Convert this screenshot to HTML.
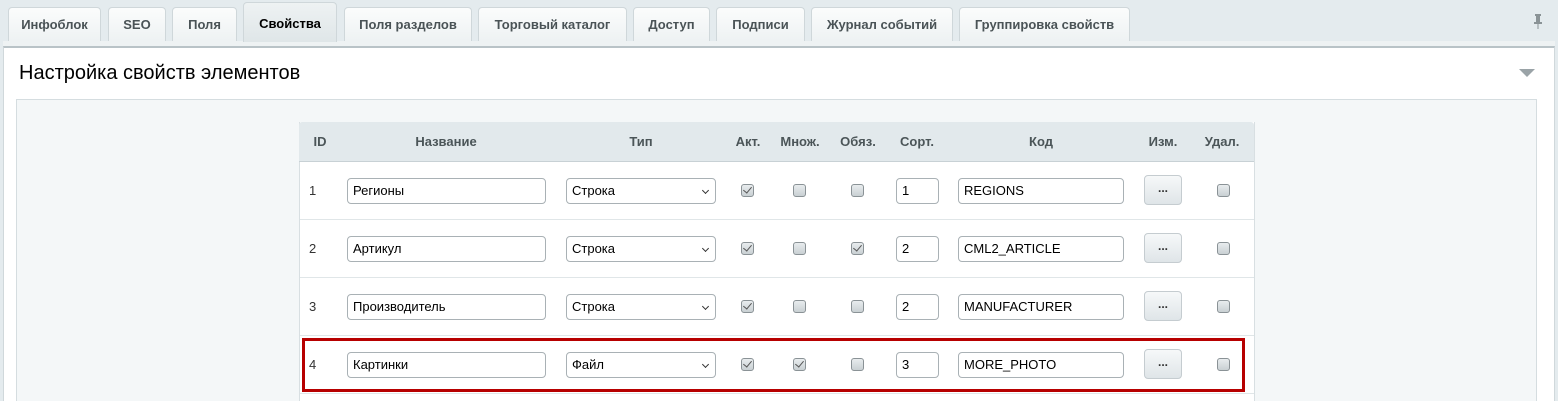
<!DOCTYPE html>
<html style="width:1558px;height:401px;overflow:hidden"><head><meta charset="utf-8"><style>
body{margin:0;width:1558px;height:401px;overflow:hidden;background:#e4ebee;font-family:"Liberation Sans",Arial,sans-serif;position:relative}
.tab{position:absolute;top:7px;height:34px;background:linear-gradient(#fbfcfc,#eef2f3);border:1px solid #cfd7da;border-bottom:none;border-radius:4px 4px 0 0;font-size:13px;font-weight:bold;color:#4a5356;text-align:center;line-height:34px;box-sizing:border-box}
.tab.act{top:2px;height:40px;background:linear-gradient(#eef2f3,#dfe6e8);color:#000;line-height:42px}
.panel{position:absolute;left:3px;top:46px;width:1552px;height:355px;background:#fff;border-top:2px solid #b9c3c7;border-left:1px solid #d0d8db;border-right:1px solid #d0d8db;box-sizing:border-box}
.strip{position:absolute;left:3px;top:41px;width:1552px;height:5px;background:#eef2f3}
h1{position:absolute;left:19px;top:62px;margin:0;font-weight:normal;font-size:20px;color:#000}
.inner{position:absolute;left:16px;top:99px;width:1519px;height:302px;background:#f4f7f8;border:1px solid #d5dde0;border-bottom:none}
.tbl{position:absolute;left:299px;top:122px;width:954px;height:279px;background:#fff;border:1px solid #d8dfe2;border-top:none;border-bottom:none}
.hdr{position:absolute;left:299px;top:122px;width:955px;height:39px;background:#e2e9ec;border-bottom:1px solid #c8d1d5;border-radius:3px 3px 0 0}
.h{position:absolute;top:134px;font-size:13px;font-weight:bold;color:#4b5558;transform:translateX(-50%)}
.line{position:absolute;left:300px;width:954px;height:1px;background:#e0e6e8}
.id{position:absolute;left:309px;font-size:13px;color:#333}
.in{position:absolute;height:26px;box-sizing:border-box;border:1px solid #a9b1b5;border-radius:4px;background:#fff;font-size:13px;color:#000;padding-left:5px;line-height:24px}
.sel:after{content:"";position:absolute;right:7px;top:9px;width:4px;height:4px;border-right:1.5px solid #333;border-bottom:1.5px solid #333;transform:rotate(45deg)}
.cb{position:absolute;width:13px;height:13px;box-sizing:border-box;border:1px solid #8a9296;border-radius:3px;background:linear-gradient(#e8ecee,#c9d0d3)}
.cb.c:after{content:"";position:absolute;left:3px;top:0px;width:4px;height:7px;border-right:1.5px solid #555;border-bottom:1.5px solid #555;transform:rotate(40deg)}
.btn{position:absolute;left:1144px;width:38px;height:30px;box-sizing:border-box;border:1px solid #c5ccd0;border-radius:4px;background:linear-gradient(#f6f8f9,#dfe5e8);font-size:12px;font-weight:bold;text-align:center;line-height:24px;color:#333}
.red{position:absolute;left:302px;top:338px;width:943px;height:54px;box-sizing:border-box;border:3px solid #b70000}
</style></head><body>
<div class="tab" style="left:8px;width:93px">Инфоблок</div>
<div class="tab" style="left:108px;width:58px">SEO</div>
<div class="tab" style="left:172px;width:65px">Поля</div>
<div class="tab" style="left:344px;width:128px">Поля разделов</div>
<div class="tab" style="left:478px;width:149px">Торговый каталог</div>
<div class="tab" style="left:633px;width:77px">Доступ</div>
<div class="tab" style="left:716px;width:89px">Подписи</div>
<div class="tab" style="left:811px;width:142px">Журнал событий</div>
<div class="tab" style="left:959px;width:171px">Группировка свойств</div>
<div class="strip"></div>
<div class="panel"></div>
<div class="tab act" style="left:243px;width:94px">Свойства</div>
<svg style="position:absolute;left:1532px;top:13px" width="14" height="18"><rect x="3" y="1" width="6" height="2" fill="#8a9396"/><rect x="4" y="3" width="4" height="6" fill="#8a9396"/><rect x="2" y="9" width="8" height="2" fill="#8a9396"/><rect x="5.5" y="11" width="1" height="5" fill="#8a9396"/></svg>
<svg style="position:absolute;left:1519px;top:69px" width="16" height="9"><polygon points="0,0 16,0 8,8" fill="#9aa3a7"/></svg>
<h1>Настройка свойств элементов</h1>
<div class="inner"></div>
<div class="tbl"></div>
<div class="hdr"></div>
<div class="h" style="left:320px">ID</div><div class="h" style="left:446px">Название</div><div class="h" style="left:641px">Тип</div><div class="h" style="left:748px">Акт.</div><div class="h" style="left:800px">Множ.</div><div class="h" style="left:858px">Обяз.</div><div class="h" style="left:917px">Сорт.</div><div class="h" style="left:1041px">Код</div><div class="h" style="left:1163px">Изм.</div><div class="h" style="left:1222px">Удал.</div>
<div class="line" style="top:219px"></div><div class="line" style="top:277px"></div><div class="line" style="top:335px"></div><div class="line" style="top:393px"></div>

<div class="id" style="top:183px">1</div>
<div class="in" style="left:347px;top:178px;width:199px">Регионы</div>
<div class="in sel" style="left:566px;top:178px;width:150px">Строка</div>
<div class="cb c" style="left:741px;top:184px"></div><div class="cb" style="left:793px;top:184px"></div><div class="cb" style="left:851px;top:184px"></div>
<div class="in" style="left:896px;top:178px;width:43px">1</div>
<div class="in" style="left:958px;top:178px;width:166px">REGIONS</div>
<div class="btn" style="top:175px">...</div><div class="cb" style="left:1217px;top:184px"></div>

<div class="id" style="top:241px">2</div>
<div class="in" style="left:347px;top:236px;width:199px">Артикул</div>
<div class="in sel" style="left:566px;top:236px;width:150px">Строка</div>
<div class="cb c" style="left:741px;top:242px"></div><div class="cb" style="left:793px;top:242px"></div><div class="cb c" style="left:851px;top:242px"></div>
<div class="in" style="left:896px;top:236px;width:43px">2</div>
<div class="in" style="left:958px;top:236px;width:166px">CML2_ARTICLE</div>
<div class="btn" style="top:233px">...</div><div class="cb" style="left:1217px;top:242px"></div>

<div class="id" style="top:299px">3</div>
<div class="in" style="left:347px;top:294px;width:199px">Производитель</div>
<div class="in sel" style="left:566px;top:294px;width:150px">Строка</div>
<div class="cb c" style="left:741px;top:300px"></div><div class="cb" style="left:793px;top:300px"></div><div class="cb" style="left:851px;top:300px"></div>
<div class="in" style="left:896px;top:294px;width:43px">2</div>
<div class="in" style="left:958px;top:294px;width:166px">MANUFACTURER</div>
<div class="btn" style="top:291px">...</div><div class="cb" style="left:1217px;top:300px"></div>

<div class="id" style="top:357px">4</div>
<div class="in" style="left:347px;top:352px;width:199px">Картинки</div>
<div class="in sel" style="left:566px;top:352px;width:150px">Файл</div>
<div class="cb c" style="left:741px;top:358px"></div><div class="cb c" style="left:793px;top:358px"></div><div class="cb" style="left:851px;top:358px"></div>
<div class="in" style="left:896px;top:352px;width:43px">3</div>
<div class="in" style="left:958px;top:352px;width:166px">MORE_PHOTO</div>
<div class="btn" style="top:349px">...</div><div class="cb" style="left:1217px;top:358px"></div>
<div class="red"></div>
</body></html>
